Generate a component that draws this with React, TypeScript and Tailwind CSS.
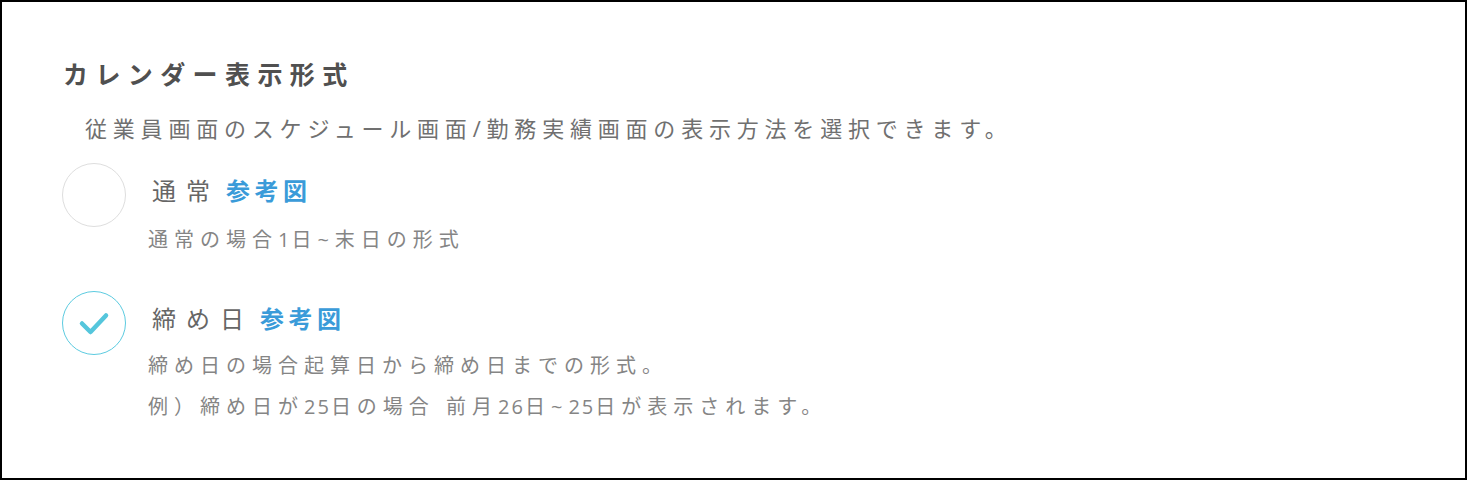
import React from "react";

const font = { fontFamily: '"Open Sans", "Noto Sans CJK JP", sans-serif' };

const CheckIcon: React.FC = () => (
  <svg width="34" height="34" viewBox="0 0 34 34" fill="none">
    <path
      d="M5 17.5 L13.5 26 L29 9.5"
      stroke="#55c6dc"
      strokeWidth="4.5"
      strokeLinecap="round"
      strokeLinejoin="round"
    />
  </svg>
);

// digits sit closer together than the kana/kanji around them
const SubLine: React.FC<{ text: string }> = ({ text }) => (
  <div className="text-[20px] leading-[41px] tracking-[6px] text-[#858585] whitespace-pre">
    {text.split(/([0-9]+)/).map((part, i) =>
      /^[0-9]+$/.test(part) ? (
        <span key={i} className="tracking-[2px]">
          {part}
        </span>
      ) : (
        <span key={i}>{part}</span>
      )
    )}
  </div>
);

type OptionProps = {
  label: string;
  checked: boolean;
  lines: string[];
  subTop: string;
};

const Option: React.FC<OptionProps> = ({ label, checked, lines, subTop }) => (
  <div className="flex items-start">
    <div
      className={`flex h-16 w-16 shrink-0 items-center justify-center rounded-full border bg-white ${
        checked ? "border-[#5ccbe0]" : "border-[#dedede]"
      }`}
    >
      {checked && <CheckIcon />}
    </div>
    <div className="ml-[22px] mt-[12px]">
      <div className="flex items-center leading-[32px]">
        <span className="ml-[4px] text-[24px] tracking-[10px] text-[#666]">{label}</span>
        <span className="ml-[6px] text-[24px] font-bold tracking-[4.5px] text-[#3a9bd9]">参考図</span>
      </div>
      <div className={subTop}>
        {lines.map((l) => (
          <SubLine key={l} text={l} />
        ))}
      </div>
    </div>
  </div>
);

export default function App() {
  return (
    <div className="h-[480px] w-[1467px] bg-white" style={font}>
      <div className="h-full w-full border-2 border-black pl-[61px] pt-[57px]">
        <h1 className="text-[25px] font-bold leading-[30px] tracking-[7.4px] text-[#505050]">
          カレンダー表示形式
        </h1>
        <p className="ml-[22px] mt-[25px] text-[22px] leading-[28px] tracking-[5.8px] text-[#707070]">
          従業員画面のスケジュール画面/勤務実績画面の表示方法を選択できます。
        </p>
        <div className="mt-[21px] -ml-[1px]">
          <Option label="通常" checked={false} lines={["通常の場合1日~末日の形式"]} subTop="mt-[12px]" />
        </div>
        <div className="mt-[31px] -ml-[1px]">
          <Option
            label="締め日"
            checked
            lines={[
              "締め日の場合起算日から締め日までの形式。",
              "例）締め日が25日の場合 前月26日~25日が表示されます。",
            ]}
            subTop="mt-[10px]"
          />
        </div>
      </div>
    </div>
  );
}
